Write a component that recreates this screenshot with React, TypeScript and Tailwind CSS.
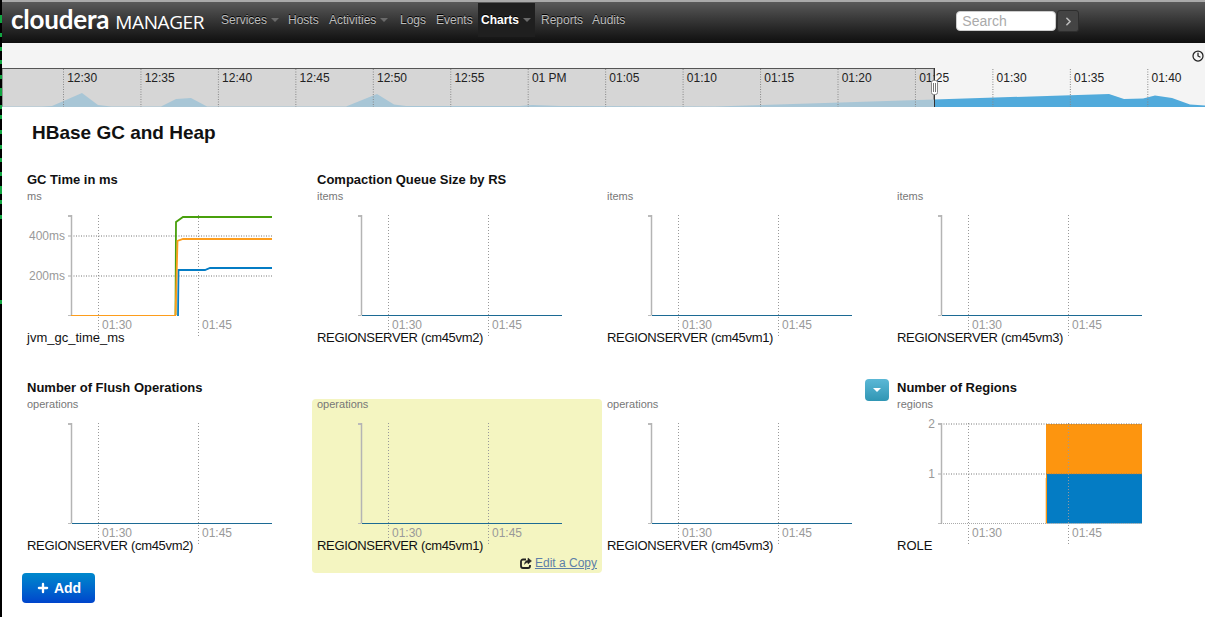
import { ChevronRight, Clock, Plus } from "lucide-react"

const font = "font-['Liberation_Sans',Arial,sans-serif]"

const navItems = [
  { label: "Services", caret: true, cls: "ml-[4px] w-[67px]" },
  { label: "Hosts", cls: "w-[41px]" },
  { label: "Activities", caret: true, cls: "w-[71px]" },
  { label: "Logs", cls: "w-[36px]" },
  { label: "Events", cls: "w-[42px]" },
]

const timeLabels = ["12:30", "12:35", "12:40", "12:45", "12:50", "12:55", "01 PM", "01:05", "01:10", "01:15", "01:20", "01:25", "01:30", "01:35", "01:40"]

function Caret() {
  return <span className="ml-[4px] inline-block h-0 w-0 border-x-[4px] border-t-[4px] border-x-transparent border-t-[#6a6a6a]" />
}

function NavBar() {
  return (
    <header className="flex h-[41px] items-start bg-gradient-to-b from-[#5a5a5a] to-[#0f0f0f] pl-[11px]">
      <div className="flex h-[38px] w-[206px] items-baseline pt-[2px] text-white">
        <span className="font-['Lato',sans-serif] text-[26px] leading-[30px] font-bold tracking-[-0.2px]">cloudera</span>
        <span className="ml-[6px] font-['Open_Sans',sans-serif] text-[19px] leading-[30px] font-medium tracking-[-0.4px]">MANAGER</span>
      </div>
      <nav className="flex h-[34px] items-center pt-[2px] text-[12px] text-[#bdbdbd] [text-shadow:0_-1px_0_#000]">
        {navItems.map((item) => (
          <span key={item.label} className={`flex items-center ${item.cls}`}>
            {item.label}
            {item.caret && <Caret />}
          </span>
        ))}
        <span className="flex h-[34px] w-[57px] items-center bg-[#1f1f1f] pl-[3px] font-bold text-white">
          Charts
          <Caret />
        </span>
        <span className="ml-[6px] w-[51px]">Reports</span>
        <span>Audits</span>
      </nav>
      <div className="ml-[331px] flex items-center pt-[8px]">
        <div className="flex h-[20px] w-[100px] items-center rounded-[4px] border border-[#ccc] bg-white pl-[5px] text-[14px] text-[#aaa]">
          Search
        </div>
        <button className="ml-px flex h-[22px] w-[22px] items-center justify-center rounded-[3px] border border-[#2e2e2e] bg-[#444]">
          <ChevronRight className="h-[13px] w-[13px] text-[#bbb]" strokeWidth={3} />
        </button>
      </div>
    </header>
  )
}

function Timeline() {
  return (
    <svg className="block h-[39px] w-[1205px] bg-[#f4f4f4]" viewBox="0 68 1205 39">
      <polygon points="715,107 934,99.5 1109,94 1124,99 1143,98.5 1155,95.5 1172,98 1190,104.5 1205,105.5 1205,107" fill="#51aadb" />
      <rect x="2" y="68.5" width="932" height="39" fill="#d6d6d6" stroke="#555" />
      <polygon points="2,106.5 42,106.5 52,106 82,93 98,105 111,106.5 161,106.5 176,99 191,98 207,106.5 346,106.5 377,94 394,104.5 406,106 520,106 532,105 560,106 715,106.5 934,99.5 934,107 2,107" fill="#a8c6d6" />
      <line x1="934.5" y1="68" x2="934.5" y2="107" stroke="#333" />
      {timeLabels.map((t, i) => {
        const x = 63.5 + i * 77.45
        return (
          <g key={t}>
            <line x1={x} y1="69" x2={x} y2="107" stroke="#888" strokeDasharray="1 1.5" />
            <text x={x + 3.7} y="82" fontSize="12" fill="#222">{t}</text>
          </g>
        )
      })}
      <rect x="931.5" y="80.5" width="6" height="14" rx="2" fill="#fff" stroke="#888" />
      <path d="M933.5 83v9M935.5 83v9" stroke="#777" />
    </svg>
  )
}

type Series = { points: string; color: string }

type ChartProps = {
  title?: string
  unit: string
  caption: string
  highlight?: boolean
  yTicks?: { y: number; label: string }[]
  lines?: Series[]
  regions?: boolean
}

function Chart({ yTicks = [], lines, regions }: ChartProps) {
  return (
    <svg className="block h-[127px] w-[290px] shrink-0" viewBox="0 0 290 127">
      {regions && (
        <>
          <rect x="155" y="6" width="95" height="50" fill="#fd950f" />
          <rect x="155" y="56" width="95" height="49.5" fill="#047cc4" />
          <line x1="154.5" y1="6" x2="154.5" y2="105.5" stroke="#fd950f" />
          <line x1="153.5" y1="60" x2="153.5" y2="105" stroke="#f6dfbd" />
        </>
      )}
      <line x1="76.5" y1="5" x2="76.5" y2="126" stroke="#999" strokeDasharray="1 2" />
      <line x1="176.5" y1="5" x2="176.5" y2="126" stroke="#999" strokeDasharray="1 2" />
      {yTicks.map((t) => (
        <g key={t.label}>
          <line x1="49" y1={t.y} x2="250" y2={t.y} stroke="#777" strokeDasharray="1 1.5" />
          <line x1="46" y1={t.y} x2="49" y2={t.y} stroke="#aaa" />
          <text x="43" y={t.y + 4} textAnchor="end" fontSize="12" fill="#999">{t.label}</text>
        </g>
      ))}
      <line x1="46" y1="6" x2="50" y2="6" stroke="#bbb" strokeWidth="2" />
      <line x1="46" y1="105.5" x2="49" y2="105.5" stroke="#bbb" />
      <line x1="49.5" y1="5" x2="49.5" y2="105.5" stroke="#b4b4b4" strokeWidth="1.5" />
      {regions && <line x1="49" y1="105.5" x2="250" y2="105.5" stroke="#aaa" strokeDasharray="1 1" />}
      {!regions && !lines && <line x1="50" y1="105.5" x2="250" y2="105.5" stroke="#1c6a94" />}
      {lines && <line x1="49" y1="105.5" x2="154" y2="105.5" stroke="#fd9d1c" />}
      {lines?.map((s) => (
        <polyline key={s.color} points={s.points} fill="none" stroke={s.color} strokeWidth="1.8" />
      ))}
      <text x="80" y="119" fontSize="12" fill="#999">01:30</text>
      <text x="180" y="119" fontSize="12" fill="#999">01:45</text>
    </svg>
  )
}

const gcLines: Series[] = [
  { color: "#047cc4", points: "156,106 156.5,60 183,60 188,58 250,58" },
  { color: "#48a00c", points: "153.5,105 154,12 161,7 250,7" },
  { color: "#fd9d1c", points: "153.5,105.5 155.5,31 161,29 250,29" },
]

const row1: ChartProps[] = [
  { title: "GC Time in ms", unit: "ms", caption: "jvm_gc_time_ms", lines: gcLines, yTicks: [{ y: 26, label: "400ms" }, { y: 66, label: "200ms" }] },
  { title: "Compaction Queue Size by RS", unit: "items", caption: "REGIONSERVER (cm45vm2)" },
  { unit: "items", caption: "REGIONSERVER (cm45vm1)" },
  { unit: "items", caption: "REGIONSERVER (cm45vm3)" },
]

const row2: ChartProps[] = [
  { title: "Number of Flush Operations", unit: "operations", caption: "REGIONSERVER (cm45vm2)" },
  { unit: "operations", caption: "REGIONSERVER (cm45vm1)", highlight: true },
  { unit: "operations", caption: "REGIONSERVER (cm45vm3)" },
  { title: "Number of Regions", unit: "regions", caption: "ROLE", regions: true, yTicks: [{ y: 6, label: "2" }, { y: 56, label: "1" }] },
]

function ShareIcon() {
  return (
    <svg className="h-[12px] w-[12px]" viewBox="0 0 12 12" fill="none" stroke="#222">
      <path d="M6 2.5H3a2 2 0 0 0-2 2V9a2 2 0 0 0 2 2h5a2 2 0 0 0 2-2V8" strokeWidth="1.8" />
      <path d="M8 1l3.5 3L8 7V5.4C6.5 5.4 5.2 6 4.5 7.4 4.6 5 6 3.4 8 3.2z" fill="#222" strokeWidth="0.5" />
    </svg>
  )
}

function ChartCell(props: ChartProps) {
  const { title, unit, caption, highlight } = props
  return (
    <div className="relative flex h-[195px] flex-col">
      <h3 className="h-[21px] pl-[5px] text-[13px] leading-[20px] font-bold text-[#111]">{title}</h3>
      <div className={`flex h-[174px] flex-col rounded-[4px] ${highlight ? "bg-[#f4f5c1]" : ""}`}>
        <div className="h-[19px] pl-[5px] text-[11px] leading-[11px] text-[#777]">{unit}</div>
        <Chart {...props} />
        <div className={`-mt-[6px] pl-[5px] text-[13px] leading-[14px] text-[#111] ${caption.startsWith("REGION") ? "tracking-[-0.32px]" : ""}`}>{caption}</div>
        {highlight && (
          <div className="mt-auto flex items-center justify-end gap-[3px] pr-[5px] pb-[3px] text-[12px] leading-[14px] text-[#5d7fa8] underline">
            <ShareIcon />
            <span>Edit a Copy</span>
          </div>
        )}
      </div>
      {props.regions && (
        <button className="absolute top-[1px] -left-[27px] flex h-[22px] w-[24px] items-center justify-center rounded-[4px] bg-gradient-to-b from-[#5bb8d6] to-[#2f96b4]">
          <span className="h-0 w-0 border-x-[4px] border-t-[4px] border-x-transparent border-t-white" />
        </button>
      )}
    </div>
  )
}

function LeftEdge() {
  return (
    <svg className="absolute top-0 left-0 h-[617px] w-[2px]" viewBox="0 0 2 617">
      <rect width="2" height="617" fill="#000" />
      {[15, 19, 33, 47, 60, 75, 88, 92, 105, 115, 130, 145, 158, 172, 186, 190, 200, 215, 300].map((y) => (
        <rect key={y} x="0" y={y} width="2" height="4" fill="#12a642" />
      ))}
    </svg>
  )
}

export default function App() {
  return (
    <div className={`relative h-[617px] w-[1205px] overflow-hidden bg-white ${font}`}>
      <div className="h-[2px] bg-[#aaa]" />
      <NavBar />
      <div className="flex h-[25px] items-center justify-end bg-[#f4f4f4] pr-px">
        <Clock className="h-[12px] w-[12px] text-[#222]" strokeWidth={2.5} />
      </div>
      <Timeline />
      <main>
        <h1 className="h-[63px] pt-[14px] pl-[32px] text-[19px] leading-[24px] font-bold text-[#111]">HBase GC and Heap</h1>
        <div className="ml-[22px] grid grid-cols-[repeat(4,290px)] gap-y-[13px]">
          {row1.concat(row2).map((c, i) => (
            <ChartCell key={i} {...c} />
          ))}
        </div>
        <button className="ml-[22px] flex h-[30px] w-[73px] items-center justify-center gap-[4px] rounded-[4px] bg-gradient-to-b from-[#0088cc] to-[#0044cc] text-[14px] font-bold text-white">
          <Plus className="h-[14px] w-[14px]" strokeWidth={4} />
          Add
        </button>
      </main>
      <LeftEdge />
    </div>
  )
}
